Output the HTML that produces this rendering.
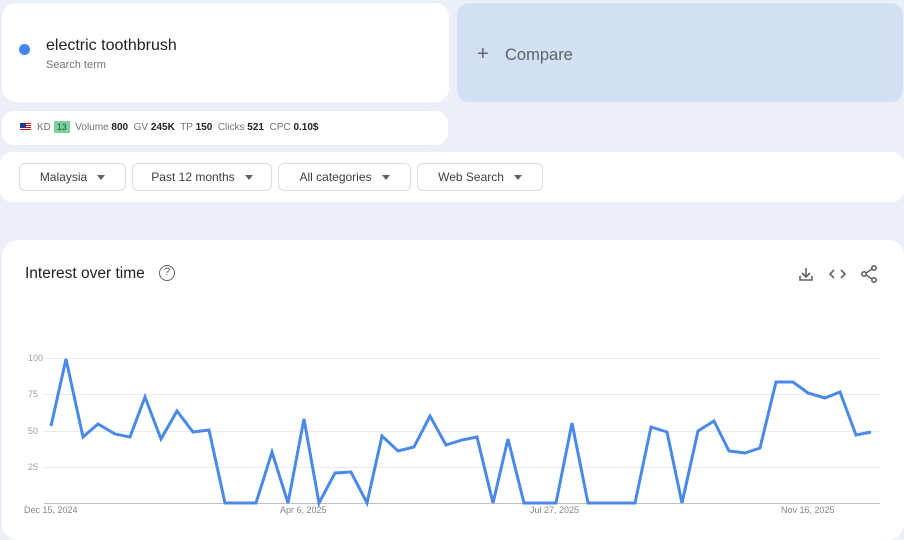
<!DOCTYPE html>
<html><head><meta charset="utf-8"><style>
*{margin:0;padding:0;box-sizing:border-box}
body{width:904px;height:526px;overflow:hidden;background:#ebf0f8;font-family:"Liberation Sans",sans-serif;position:relative}
.card{position:absolute;background:#fff;border-radius:14px}
.dd{position:absolute;top:163px;height:28px;border:1px solid #dadce0;border-radius:6px;font-size:12px;color:#3c4043;display:flex;align-items:center;justify-content:center;gap:10px;background:#fff}
.dd i{width:0;height:0;border-left:4px solid transparent;border-right:4px solid transparent;border-top:5px solid #5f6368}
.m{color:#70757a}.b{font-weight:bold;color:#202124}
.yl{position:absolute;left:28px;font-size:9px;color:#9aa0a6}
.xl{position:absolute;top:505px;font-size:9px;color:#80868b}
</style></head><body>
<div class="card" style="left:2px;top:3px;width:447px;height:99px;">
 <div style="position:absolute;left:17px;top:41px;width:11px;height:11px;border-radius:50%;background:#4285f4"></div>
 <div style="position:absolute;left:44px;top:34px;font-size:16px;color:#202124">electric toothbrush</div>
 <div style="position:absolute;left:44px;top:56px;font-size:11px;color:#70757a">Search term</div>
</div>
<div style="position:absolute;left:457px;top:3px;width:446px;height:99px;background:#d3e0f3;border-radius:12px">
 <div style="position:absolute;left:20px;top:40px;font-size:20px;color:#5f6368;font-weight:300">+</div>
 <div style="position:absolute;left:48px;top:43px;font-size:16.5px;color:#5f6368">Compare</div>
</div>
<div class="card" style="left:2px;top:111px;width:446px;height:34px;border-radius:12px;font-size:10px;">
 <div style="position:absolute;left:18px;top:12px;width:11px;height:8px;background:linear-gradient(#c00 0 12%,#fff 12% 25%,#c00 25% 37%,#fff 37% 50%,#c00 50% 62%,#fff 62% 75%,#c00 75% 87%,#fff 87%)"><div style="width:6px;height:5px;background:#1a3c8f"></div></div>
 <div style="position:absolute;left:35px;top:11px;white-space:nowrap"><span class="m">KD</span> <span style="background:#7fd0a0;color:#1a5a3a;padding:1px 3px;font-size:9px">13</span>&nbsp; <span class="m">Volume</span> <span class="b">800</span>&nbsp; <span class="m">GV</span> <span class="b">245K</span>&nbsp; <span class="m">TP</span> <span class="b">150</span>&nbsp; <span class="m">Clicks</span> <span class="b">521</span>&nbsp; <span class="m">CPC</span> <span class="b">0.10$</span></div>
</div>
<div class="card" style="left:0;top:152px;width:904px;height:50px;border-radius:12px"></div>
<div class="dd" style="left:19px;width:107px">Malaysia<i></i></div>
<div class="dd" style="left:132px;width:140px">Past 12 months<i></i></div>
<div class="dd" style="left:278px;width:133px">All categories<i></i></div>
<div class="dd" style="left:417px;width:126px">Web Search<i></i></div>
<div class="card" style="left:2px;top:240px;width:902px;height:300px;border-radius:16px"></div>
<div style="position:absolute;left:25px;top:265px;font-size:15.5px;color:#202124">Interest over time</div>
<div style="position:absolute;left:159px;top:265px;width:16px;height:16px;border:1.5px solid #5f6368;border-radius:50%;font-size:11px;color:#5f6368;text-align:center;line-height:13px">?</div>
<svg style="position:absolute;left:0;top:0" width="904" height="526">
 <g stroke="#5f6368" stroke-width="1.6" fill="none">
  <path d="M806 268v9M802 273l4 4 4-4M800 276v4h12v-4"/>
  <path d="M834 270l-4 4 4 4M841 270l4 4-4 4"/>
  <circle cx="874" cy="268" r="2.2"/><circle cx="864" cy="274" r="2.2"/><circle cx="874" cy="280" r="2.2"/>
  <path d="M866 273l6-4M866 275l6 4"/>
 </g>
 <g stroke="#e8eaed" stroke-width="1">
  <path d="M44 358.5H880M44 394.5H880M44 431.5H880M44 467.5H880"/>
 </g>
 <path d="M44 503.5H880" stroke="#bdc1c6"/>
 <polyline fill="none" stroke="#4a89e8" stroke-width="3" stroke-linejoin="miter" points="51,426 66,359 83,437 98,424 115,434 130,437 145,397 161,439 177,411 193,432 209,430 225,503 241,503 256,503 272,452 288,503 304,419 319,503 335,473 351,472 367,503 382,436 398,451 414,447 430,416 446,445 462,440 477,437 493,503 508,439 524,503 540,503 556,503 572,423 588,503 603,503 619,503 635,503 651,427 667,432 682,503 698,431 714,421 729,451 745,453 760,448 776,382 793,382 808,393 825,398 840,392 856,435 871,432"/>
</svg>
<div class="yl" style="top:353px">100</div>
<div class="yl" style="top:389px">75</div>
<div class="yl" style="top:426px">50</div>
<div class="yl" style="top:462px">25</div>
<div class="xl" style="left:24px">Dec 15, 2024</div>
<div class="xl" style="left:280px">Apr 6, 2025</div>
<div class="xl" style="left:530px">Jul 27, 2025</div>
<div class="xl" style="left:781px">Nov 16, 2025</div>
</body></html>
